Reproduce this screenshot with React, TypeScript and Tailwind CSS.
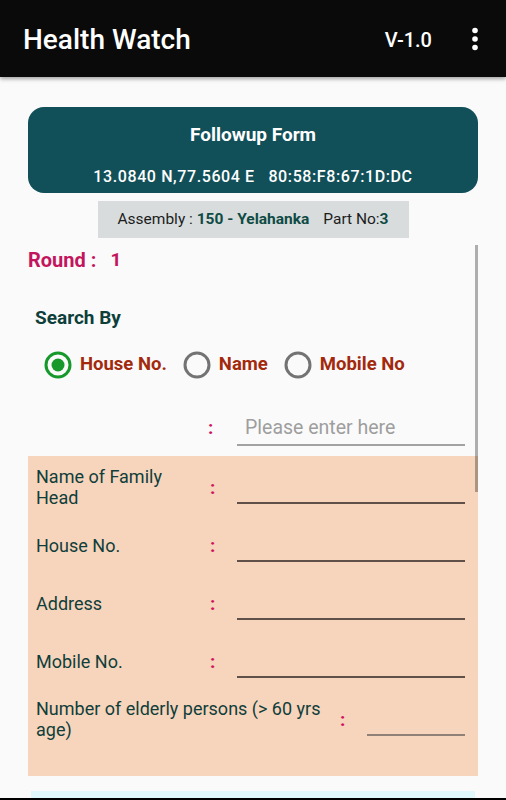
import React from "react";

const rows = ["Name of Family Head", "House No.", "Address", "Mobile No."];

function Radio({ checked }: { checked?: boolean }) {
  return (
    <svg width="28" height="28" viewBox="0 0 28 28" className="shrink-0">
      <circle
        cx="14"
        cy="14"
        r="12"
        fill="none"
        stroke={checked ? "#17982b" : "#737373"}
        strokeWidth="3"
      />
      {checked && <circle cx="14" cy="14" r="6.5" fill="#17982b" />}
    </svg>
  );
}

export default function App() {
  return (
    <div
      className="relative flex h-[800px] w-[506px] flex-col overflow-hidden bg-[#fafafa]"
      style={{ fontFamily: "Roboto, 'Liberation Sans', sans-serif" }}
    >
      {/* App bar */}
      <header className="relative z-10 flex h-[77px] shrink-0 items-center bg-[#0a0a0a] pl-[23px] pr-[28px] pt-[2px] shadow-[0_2px_4px_rgba(0,0,0,0.35)]">
        <h1 className="flex-1 text-[28px] font-medium text-white">Health Watch</h1>
        <span className="text-[20px] font-medium text-white">V-1.0</span>
        <svg width="6" height="24" viewBox="0 0 6 24" className="ml-[40px] -mt-[2px]">
          <circle cx="3" cy="3.5" r="2.8" fill="#fff" />
          <circle cx="3" cy="12" r="2.8" fill="#fff" />
          <circle cx="3" cy="20.5" r="2.8" fill="#fff" />
        </svg>
      </header>

      <main className="relative flex-1 overflow-hidden">
        {/* scrollbar */}
        <div className="absolute left-[475px] top-[168px] h-[247px] w-[3px] bg-black/30" />

        {/* Followup card */}
        <div className="mx-[28px] mt-[30px] flex h-[86px] flex-col items-center rounded-[16px] bg-[#125059] pt-[18px] text-white">
          <p className="text-[19px] font-bold leading-[20px]">Followup Form</p>
          <p className="mt-[22px] whitespace-pre text-[16px] font-medium leading-[20px] tracking-[0.6px]">
            {"13.0840 N,77.5604 E   80:58:F8:67:1D:DC"}
          </p>
        </div>

        {/* Assembly */}
        <div className="mx-auto mt-[8px] flex h-[37px] w-[311px] items-center justify-center bg-[#d8dcdc] text-[15.5px] text-[#1c1c1c]">
          <span className="whitespace-pre">Assembly : </span>
          <span className="font-bold text-[#0f4a45]">150 - Yelahanka</span>
          <span className="ml-[14px]">Part No:</span>
          <span className="font-bold text-[#0f4a45]">3</span>
        </div>

        {/* Round */}
        <div className="ml-[28px] mt-[10px] flex h-[24px] items-center text-[20px] font-bold leading-[24px] text-[#c3155d]">
          <span>Round :</span>
          <span className="ml-[14px] text-[19px]">1</span>
        </div>

        {/* Search By */}
        <p className="ml-[35px] mt-[34px] h-[24px] text-[19px] font-bold leading-[24px] text-[#0e3f3b]">
          Search By
        </p>

        <div className="ml-[44px] mt-[21px] flex h-[28px] items-center gap-[16px] text-[18.5px] font-bold text-[#a3290d]">
          <div className="flex items-center gap-[8px]">
            <Radio checked />
            <span>House No.</span>
          </div>
          <div className="flex items-center gap-[8px]">
            <Radio />
            <span>Name</span>
          </div>
          <div className="flex items-center gap-[8px]">
            <Radio />
            <span>Mobile No</span>
          </div>
        </div>

        {/* search input */}
        <div className="mt-[32px] flex items-center pl-[208px]">
          <span className="w-[29px] text-[19px] font-bold text-[#d0105a]">:</span>
          <div className="flex h-[35px] w-[228px] items-center border-b-2 border-[#a2a2a2] pl-[8px] text-[19.5px] text-[#9e9e9e]">
            Please enter here
          </div>
        </div>

        {/* Family details */}
        <div className="mx-[28px] mt-[10px] bg-[#f7d4bc] pb-[28px] pt-[2px] text-[18px] leading-[21px] text-[#103e3a]">
          {rows.map((label) => (
            <div key={label} className="flex h-[58px] items-center pl-[8px]">
              <div className="w-[174px] pr-[40px]">{label}</div>
              <span className="w-[27px] text-[19px] font-bold text-[#d0105a]">:</span>
              <div className="h-[34px] w-[228px] border-b-2 border-[#5f514a]" />
            </div>
          ))}
          <div className="flex h-[58px] items-center pl-[8px]">
            <div className="w-[304px] pr-[10px]">Number of elderly persons (&gt; 60 yrs age)</div>
            <span className="w-[27px] text-[19px] font-bold text-[#d0105a]">:</span>
            <div className="h-[34px] w-[98px] border-b-2 border-[#8f8078]" />
          </div>
        </div>

        <div className="mx-[31px] mt-[15px] h-[40px] bg-[#e0f8fb]" />
      </main>
      <div className="h-[2px] shrink-0 bg-black" />
    </div>
  );
}
